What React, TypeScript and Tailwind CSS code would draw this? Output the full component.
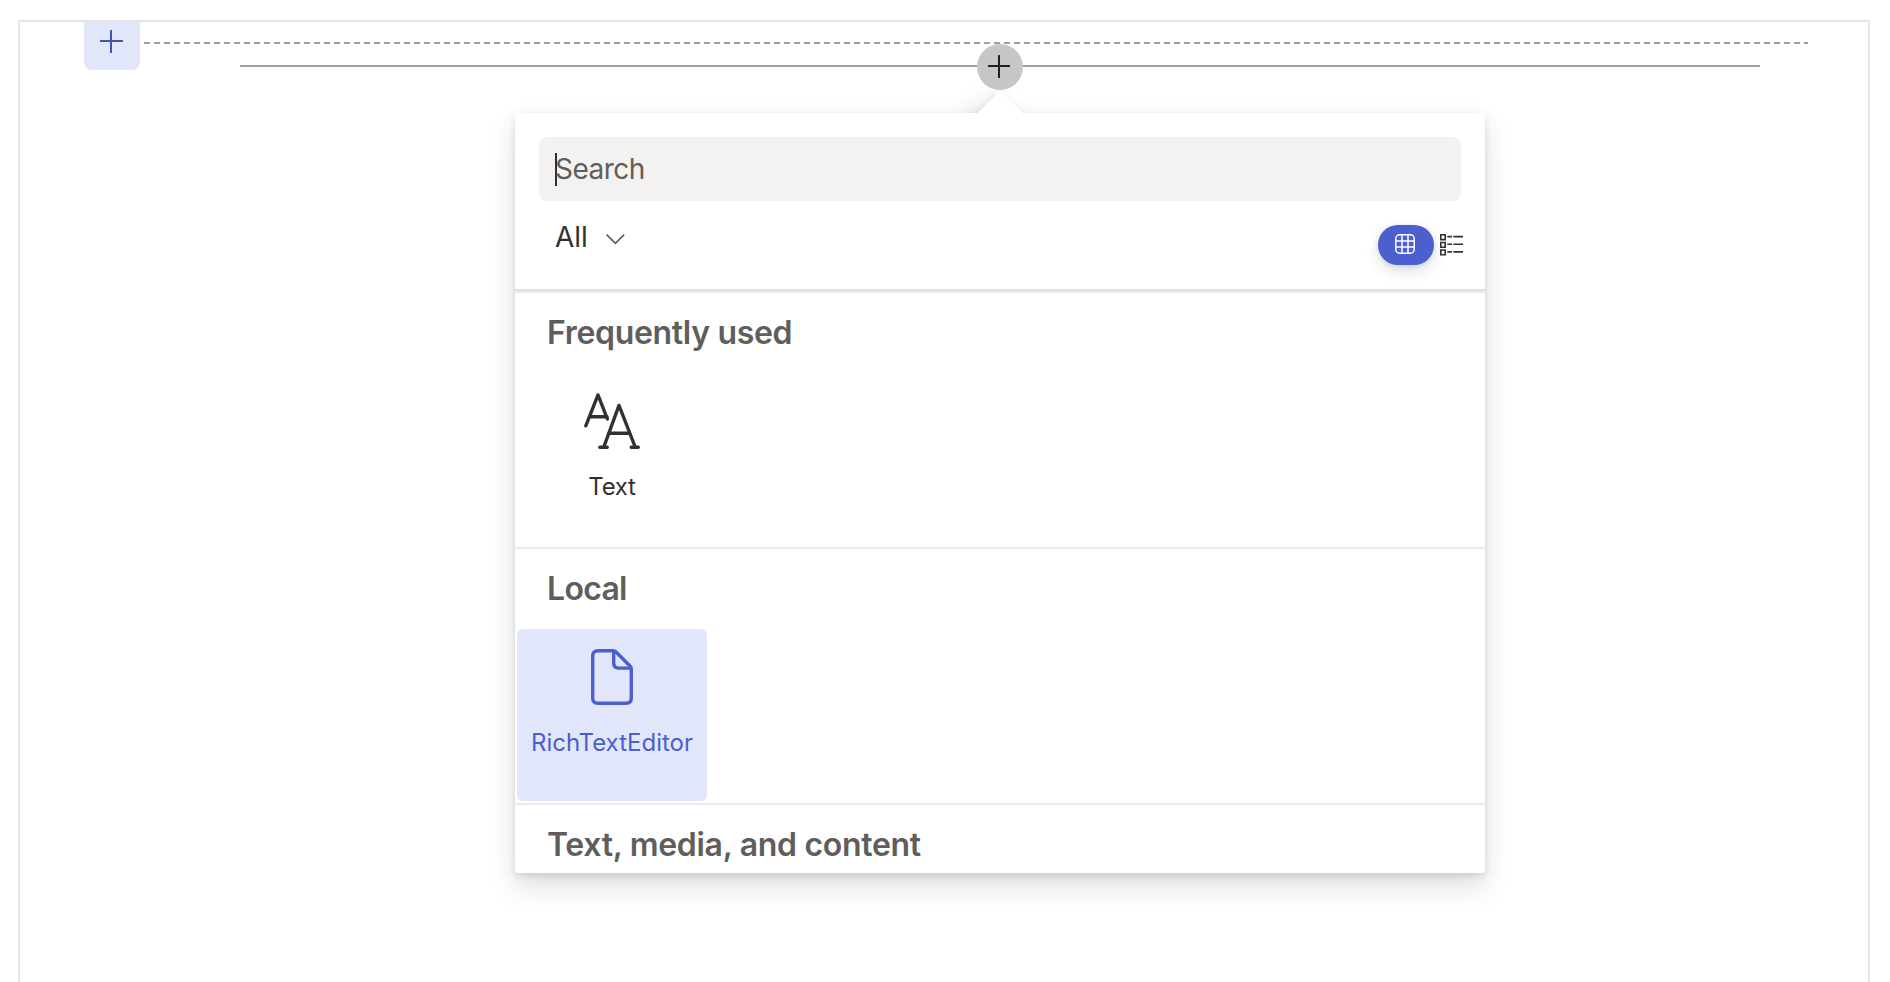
import React from "react";

function Plus({ className, size = 23 }: { className?: string; size?: number }) {
  return (
    <svg className={className} width={size} height={23} viewBox={`0 0 ${size} 23`} fill="currentColor">
      <rect x="10" y="0" width="2" height="23" rx="0.5" />
      <rect x="0" y="10" width={size} height="2" rx="0.5" />
    </svg>
  );
}

function TextIcon() {
  return (
    <svg width="56" height="56" viewBox="0 0 56 56" fill="none" stroke="currentColor" strokeWidth="3.4" strokeLinecap="round" strokeLinejoin="round">
      <path d="M1.8 32.8 14 1.9 23.4 26" />
      <path d="M6.5 23.7H23" />
      <path d="M20 53.5 35 12.4 51 53.5" />
      <path d="M25 40.3H45" />
      <path d="M15.8 54.2H23.2M47.2 54.2H54.3" />
    </svg>
  );
}

function PageIcon() {
  return (
    <svg width="42" height="56" viewBox="0 0 42 56" fill="none" stroke="currentColor" strokeWidth="3.4" strokeLinejoin="round">
      <path d="M7.2 1.7H22Q23.7 1.7 24.8 2.8L39.2 17.2Q40.3 18.3 40.3 20V49Q40.3 54.3 35 54.3H7.2Q1.7 54.3 1.7 49V7Q1.7 1.7 7.2 1.7Z" />
      <path d="M22.7 2V14.3Q22.7 19.1 27.5 19.1H40" />
    </svg>
  );
}

function GridIcon() {
  return (
    <svg width="20" height="20" viewBox="0 0 20 20" fill="none" stroke="currentColor" strokeWidth="1.5">
      <rect x="0.8" y="0.8" width="18.4" height="18.4" rx="3.8" />
      <path d="M7 1V19M13 1V19M1 7H19M1 13H19" />
    </svg>
  );
}

function ListIcon() {
  return (
    <svg width="23" height="22" viewBox="0 0 23 22" fill="none" stroke="currentColor" strokeWidth="1.6">
      <path d="M0.8 0.8H5.2V5.6H0.8ZM0.8 8.5H5.2V13.2H0.8ZM0.8 16H5.2V20.8H0.8Z" />
      <path d="M7.3 2.6H12M13.4 2.6H23M7.3 10.3H12M13.4 10.3H23M7.3 17.9H12M13.4 17.9H23" />
    </svg>
  );
}

function Heading({ children, className }: { children: React.ReactNode; className: string }) {
  return (
    <h2 className={`h-[80px] pl-8 pt-5 text-[32px] leading-10 font-semibold whitespace-nowrap text-[#605e5c] ${className}`}>
      {children}
    </h2>
  );
}

export default function App() {
  return (
    <div className="h-[982px] overflow-hidden bg-white px-[18px] pt-5 font-['Inter',sans-serif] text-[#323130]">
      <div className="relative mr-0.5 h-[1000px] border-2 border-[#e4e4e4]">
        <div className="flex h-12 gap-1 pl-16 pr-[60px]">
          <button className="flex h-12 w-14 shrink-0 items-start rounded-b-lg bg-[#e1e6fa] pl-4 pt-2 text-[#4450b4]">
            <Plus className="block" />
          </button>
          <div className="mt-5 h-0.5 flex-1 bg-[repeating-linear-gradient(90deg,#a19f9d_0_6px,transparent_6px_10px)]" />
        </div>

        <div className="absolute left-[220px] top-[43px] h-0.5 w-[1520px] bg-[#a19f9d]" />
        <button className="absolute left-[957px] top-[22px] z-20 flex h-[46px] w-[46px] items-start rounded-full bg-[#c8c6c4] pl-[11px] pt-[11px] text-[#201f1e]">
          <Plus className="block" size={22} />
        </button>

        <div className="absolute left-[495px] top-[91px] w-[970px] rounded shadow-[0_13px_29px_rgba(0,0,0,0.132),0_2.4px_7.2px_rgba(0,0,0,0.108)]">
          <div className="absolute left-[469px] top-[-16px] h-8 w-8 rotate-45 bg-white shadow-[0_13px_29px_rgba(0,0,0,0.132),0_2.4px_7.2px_rgba(0,0,0,0.108)]" />
          <div className="relative h-[760px] overflow-hidden rounded bg-white">
            <header className="h-[180px] border-b-2 border-[#ebebeb]">
              <div className="flex h-[178px] flex-col border-b-2 border-[#dedede] pl-6 pr-6 pt-6">
                <div className="flex h-16 shrink-0 items-center rounded-lg bg-[#f3f2f1] pl-4">
                  <div className="h-[33px] w-0.5 bg-[#323130]" />
                  <span className="-ml-0.5 text-[28px] leading-9 tracking-[-0.5px] text-[#605e5c]">Search</span>
                </div>
                <div className="flex justify-between pl-4">
                  <button className="flex h-9 items-start gap-[18px] pt-[18px]">
                    <span className="text-[28px] leading-9 tracking-[-0.1px]">All</span>
                    <svg className="mt-[15px]" width="19" height="11" viewBox="0 0 19 11" fill="none" stroke="#605e5c" strokeWidth="1.6">
                      <path d="M0.6 0.6 9.4 9.4 18.2 0.6" />
                    </svg>
                  </button>
                  <div className="-mr-0.5 flex gap-1.5 pt-6">
                    <button className="flex h-10 w-14 items-center justify-center rounded-full bg-[#4b5fcf] pb-0.5 pr-0.5 text-white shadow-[0_6px_14px_rgba(0,0,0,0.13),0_1px_4px_rgba(0,0,0,0.11)]">
                      <GridIcon />
                    </button>
                    <div className="pt-[9px]">
                      <ListIcon />
                    </div>
                  </div>
                </div>
              </div>
            </header>

            <section className="h-64 border-b-2 border-[#ebebeb]">
              <Heading className="tracking-[-0.32px]">Frequently used</Heading>
              <button className="ml-0.5 flex h-[172px] w-[190px] flex-col items-center rounded-md pt-5">
                <TextIcon />
                <span className="mt-[22px] text-2xl leading-8 tracking-[-0.3px]">Text</span>
              </button>
            </section>

            <section className="h-64 border-b-2 border-[#ebebeb]">
              <Heading className="tracking-[-0.7px]">Local</Heading>
              <button className="ml-0.5 flex h-[172px] w-[190px] flex-col items-center rounded-md bg-[#e1e6fa] pt-5 text-[#4b5fcf]">
                <PageIcon />
                <span className="mt-[22px] text-2xl leading-8">RichTextEditor</span>
              </button>
            </section>

            <section>
              <Heading className="tracking-[-0.3px]">Text, media, and content</Heading>
            </section>
          </div>
        </div>
      </div>
    </div>
  );
}
